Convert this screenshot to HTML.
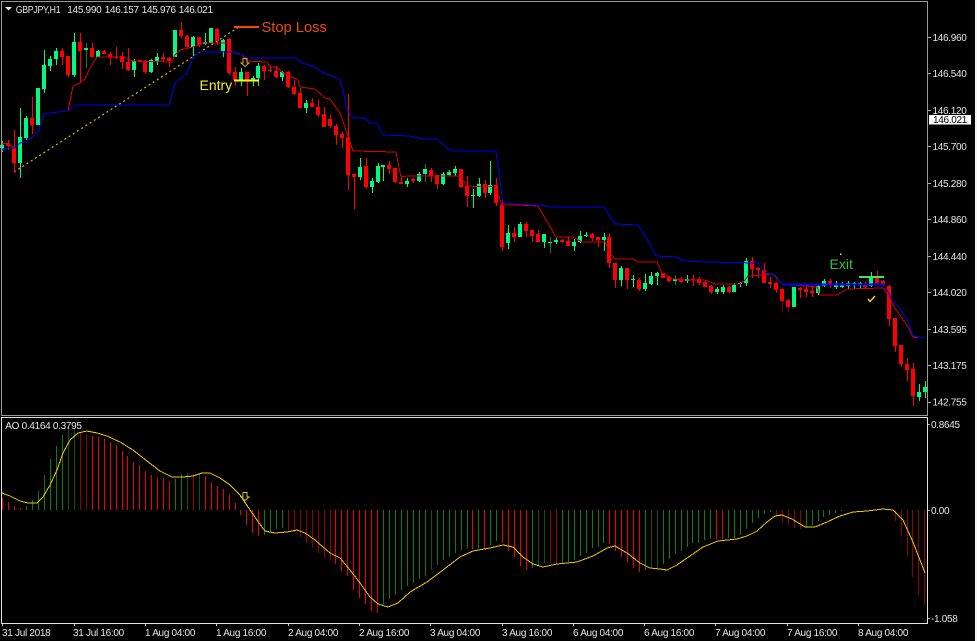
<!DOCTYPE html>
<html><head><meta charset="utf-8"><title>GBPJPY,H1</title>
<style>
html,body{margin:0;padding:0;background:#000;overflow:hidden}
svg{display:block;position:absolute;left:0;top:0}
text{font-family:"Liberation Sans",sans-serif}
.t{font-size:10px;letter-spacing:-.3px;fill:#e6e6e6}
.w{fill:none;stroke-width:1;shape-rendering:crispEdges}
.b{fill:none;stroke-width:4;shape-rendering:crispEdges}
.l{fill:none;stroke-linejoin:round;shape-rendering:crispEdges}
</style></head><body>
<svg width="977" height="641" viewBox="0 0 977 641" xmlns="http://www.w3.org/2000/svg">
<rect width="977" height="641" fill="#000"/>
<rect x="975" y="0" width="2" height="641" fill="#f4f4f4"/>

<!-- trend line -->
<path d="M14 172L239 27" fill="none" stroke="#e0b400" stroke-width="1.2" stroke-dasharray="2 3"/>

<!-- candles: wicks -->
<g transform="translate(.5 0)">
<path class="w" stroke="#00fa7f" d="M2 141V152M20 108V178M26 116V140M38 88V125M44 50V93M50 56V71M56 48V65M74 33V77M98 50V57M134 59V77M151 59V73M157 53V65M175 30V57M193 36V56M205 33V45M211 28V43M223 39V57M241 68V86M253 76V86M258 63V86M282 71V81M306 100V113M360 158V180M372 178V193M378 163V183M383 165V181M407 178V187M419 172V182M443 172V185M449 170V176M455 166V176M473 189V208M479 178V197M490 161V195M508 225V249M520 222V237M544 234V248M556 238V244M574 239V251M580 231V243M586 232V237M604 233V251M621 266V286M633 275V287M645 274V291M651 272V285M657 272V285M687 275V283M717 287V294M723 285V294M734 283V292M740 282V287M746 258V286M794 287V307M818 285V295M824 279V287M836 281V289M842 282V288M848 281V289M854 282V289M860 282V289M871 272V287M919 384V401M925 381V398"/>
<path class="w" stroke="#0a7a40" d="M86 43V68M425 164V182M550 237V253M675 275V285"/>
<path class="w" stroke="#ff0000" d="M8 140V150M14 130V173M32 97V134M62 48V65M68 56V77M80 33V82M92 43V57M104 50V54M110 52V65M116 47V59M122 52V69M128 48V71M140 60V62M145 60V74M163 53V62M169 57V67M181 22V38M187 35V47M199 37V47M217 28V45M229 38V75M235 67V86M247 72V96M264 65V80M270 66V72M276 66V78M288 71V88M294 80V95M300 88V108M312 98V107M318 100V117M324 107V127M330 115V128M336 124V145M342 132V148M348 94V190M354 173V209M366 158V189M389 161V174M395 168V183M401 177V184M413 178V183M431 168V182M437 175V189M461 169V188M467 176V207M485 180V198M496 178V206M502 200V251M514 227V242M526 222V237M532 230V242M538 230V242M562 239V243M568 237V246M592 233V241M598 237V247M609 233V268M615 263V288M627 268V289M639 278V291M663 273V278M669 276V282M681 277V283M693 275V286M699 277V285M705 280V287M711 285V294M729 286V293M752 257V278M758 267V278M764 263V283M770 277V288M776 282V293M800 287V298M806 285V297M812 287V297M830 279V288M865 282V289M877 271V284M883 280V286M889 285V326M895 318V352M901 345V367M907 358V381M913 363V406"/>
<path class="w" stroke="#8a0000" d="M782 288V312M788 298V312"/>
</g>
<!-- candles: bodies -->
<path class="b" stroke="#00fa7f" d="M2 145V148M20 137V163M26 118V138M38 88V125M44 65V89M50 59V66M56 51V59M74 42V75M86 48V50M98 51V57M134 61V70M151 60V72M157 57V61M175 30V57M193 37V47M205 42V44M211 28V43M223 40V51M241 72V80M253 78V80M258 66V78M282 72V77M306 103V108M360 167V177M372 181V187M378 166V182M383 165V167M407 181V184M419 174V181M425 169V174M443 174V184M449 172V175M455 169V173M473 195V196M479 184V196M490 185V193M508 233V243M520 224V237M544 234V242M550 242V243M556 240V242M574 242V246M580 236V242M586 235V236M604 237V240M621 268V280M633 279V280M645 283V289M651 276V284M657 273V276M675 279V281M687 279V281M717 289V292M723 287V292M734 285V292M740 283V284M746 261V283M794 287V307M818 286V293M824 281V286M836 285V287M842 285V287M848 283V286M854 283V284M860 283V285M871 278V286M919 392V397M925 387V392"/>
<path class="b" stroke="#ff0000" d="M8 143V146M14 148V163M32 118V125M62 51V57M68 56V75M80 42V51M92 48V57M104 51V54M110 54V57M116 57V58M122 56V62M128 62V70M140 60V62M145 61V72M163 57V59M169 58V61M181 30V36M187 36V47M199 37V45M217 29V41M229 39V73M235 72V80M247 72V80M264 66V71M270 70V71M276 71V77M288 72V87M294 87V94M300 93V108M312 103V107M318 107V115M324 114V127M330 119V126M336 126V135M342 134V138M348 137V175M354 174V177M366 166V187M389 165V169M395 168V182M401 182V184M413 179V181M431 170V176M437 175V184M461 169V187M467 186V196M485 184V193M496 185V203M502 205V247M514 233V237M526 224V231M532 230V236M538 234V242M562 240V242M568 241V246M592 234V238M598 237V240M609 237V263M615 263V280M627 268V280M639 280V289M663 273V278M669 277V281M681 279V282M693 279V280M699 279V283M705 282V287M711 286V292M729 287V292M752 261V269M758 268V270M764 270V283M770 282V284M776 283V290M782 289V301M788 300V307M800 288V290M806 289V292M812 291V293M830 281V285M865 284V287M877 278V283M883 281V284M889 286V319M895 318V346M901 345V364M907 364V370M913 369V396"/>

<!-- channel lines -->
<path class="l" stroke="#d80000" stroke-width="1" d="M2 143L8 144L14 148"/>
<path class="l" stroke="#d80000" stroke-width="1" d="M68 111L73 86L78 84L85 79L90 68L97 57L123 57L133 61L172 62L175 55L180 50L193 47L203 43L227 43L232 52L242 55L247 61L267 62L270 67L277 67L283 73L298 80L300 87L315 89L325 98L330 99L340 113L347 133L353 151L396 152L401 177L407 176L435 176L460 176L467 186L485 187L495 186L502 205L517 205L538 206L556 237L573 237L582 242L605 242L610 253L615 259L633 259L638 262L657 262L662 273L673 279L687 280L705 280L715 284L740 284L745 280L748 276L763 275L773 274L782 284L817 287L820 295L837 295L847 289L883 288L888 295L895 308L908 327L913 337L918 338"/>
<path class="l" stroke="#0000f0" stroke-width="1" d="M2 150L8 148L14 148L20 143L26 142L32 137L38 132L44 114L50 113L68 111L75 105L169 105L175 83L180 79L187 73L193 58L199 52L230 52L237 53L242 55L247 58L295 58L302 63L315 67L323 73L330 75L340 80L343 90L347 110L353 118L365 118L370 123L377 123L383 135L409 136L423 139L437 139L447 148L454 151L496 151L503 203L547 206L550 207L604 207L615 224L638 225L650 244L656 256L677 257L683 261L707 262L758 263L765 273L775 275L782 284"/>
<path class="l" stroke="#0000f0" stroke-width="2" d="M782 284.5L884 284.5"/>
<path class="l" stroke="#0000f0" stroke-width="1" d="M884 284L891 298L907 318L913 336L925 338"/>

<!-- annotations -->
<path d="M234 27H259" stroke="#ff4500" stroke-width="2" fill="none"/>
<text x="261.5" y="32" style="font-size:14.7px;fill:#ea4e0c">Stop Loss</text>
<path d="M234 80.5H259" stroke="#ffff00" stroke-width="2" fill="none"/>
<text x="199.5" y="90" style="font-size:14px;fill:#f0f020">Entry</text>
<path d="M243 58.5H247V63H249L245 66.5L241 63H243Z" fill="none" stroke="#d8b020" stroke-width="1"/>
<text x="829.5" y="269" style="font-size:14px;fill:#38c038">Exit</text>
<rect x="840" y="253.5" width="1.5" height="1.5" fill="#a8e8a8"/>
<path d="M859 277H884" stroke="#40e060" stroke-width="2" fill="none"/>
<path d="M868 299L870 301.5L875 296" stroke="#e8d020" stroke-width="1.5" fill="none"/>

<!-- AO histogram -->
<g transform="translate(.5 0)">
<path class="w" stroke="#ee0000" d="M2 510V498M8 510V502M14 510V506M20 510V508M92 510V436M98 510V437M104 510V439M110 510V442M116 510V445M122 510V451M127 510V456M133 510V462M139 510V465M145 510V471M151 510V475M157 510V478M163 510V478M169 510V481M205 510V476M211 510V482M217 510V486M223 510V489M229 510V494M235 510V503M240 510V515M246 510V525M252 510V533M258 510V536M335 510V564M341 510V571M347 510V576M353 510V590M359 510V598M365 510V604M371 510V611M377 510V613M472 510V549M484 510V549M502 510V543M508 510V551M514 510V557M520 510V566M526 510V570M609 510V544M615 510V551M621 510V557M627 510V562M633 510V568M639 510V572M710 510V539M716 510V539M722 510V539"/>
<path class="w" stroke="#920000" d="M80 510V432M86 510V434M193 510V474M288 510V530M294 510V532M300 510V537M306 510V543M312 510V548M318 510V553M324 510V558M330 510V560M550 510V563M556 510V564M776 510V516M782 510V522M788 510V525M794 510V528M800 510V529M895 510V521M901 510V536M907 510V556M912 510V577M918 510V595M924 510V605"/>
<path class="w" stroke="#0e7c0e" d="M26 510V506M32 510V500M38 510V491M44 510V475M50 510V459M56 510V446M62 510V435M175 510V479M181 510V474M264 510V535M270 510V532M276 510V529M282 510V528M383 510V604M389 510V599M395 510V595M401 510V590M407 510V586M413 510V583M419 510V579M425 510V576M437 510V565M443 510V560M449 510V557M455 510V553M461 510V550M467 510V548M478 510V548M490 510V545M496 510V541M532 510V568M562 510V563M568 510V562M574 510V560M580 510V556M586 510V553M592 510V548M598 510V547M603 510V543M645 510V570M663 510V564M669 510V559M675 510V554M681 510V551M687 510V547M692 510V543M698 510V543M704 510V540M710 510V538M728 510V538M734 510V538M740 510V535M746 510V529M752 510V523M758 510V518M764 510V514M770 510V512M806 510V528M812 510V525M818 510V521M823 510V517M829 510V515M835 510V513M841 510V511"/>
<path class="w" stroke="#075807" d="M68 510V427M74 510V428M187 510V473M199 510V474M431 510V570M538 510V565M544 510V563M651 510V567M657 510V568"/>
</g>
<path class="l" stroke="#f0c800" stroke-width="1" d="M2 493L10 496L20 501L28 503L37 503L43 497L50 485L57 470L63 453L70 440L78 433L87 431L97 433L107 436L120 442L133 450L147 461L160 471L172 477L183 477L193 476L202 473L210 473L220 478L230 485L240 495L248 507L257 520L265 531L275 533L287 532L297 530L305 533L315 540L323 547L330 553L340 558L350 570L360 583L370 597L378 604L388 607L398 603L410 592L427 582L443 570L460 557L473 551L490 548L503 545L513 547L523 557L533 564L543 567L557 564L577 562L593 556L607 548L615 546L627 553L640 563L650 568L660 569L667 570L677 565L690 556L703 547L718 541L737 539L747 536L757 531L767 522L775 516L782 515L792 519L805 527L815 527L827 522L840 516L853 512L867 511L883 509L893 510L903 520L913 542L925 573"/>
<path d="M243 492.5H247V497H249L245 500.5L241 497H243Z" fill="none" stroke="#c8c820" stroke-width="1"/>

<!-- frames -->
<path d="M1.5 2V415M1 1.5H928M1 415.5H928M927.5 1V416" stroke="#9a9a9a" stroke-width="1" fill="none"/>
<path d="M1.5 418V623M1 417.5H928M1 623.5H928M927.5 417V624" stroke="#e0e0e0" stroke-width="1" fill="none"/>

<!-- header -->
<path d="M5 7H12L8.5 10.5Z" fill="#f0f0f0"/>
<text x="15.7" y="13" class="t" textLength="44.6" lengthAdjust="spacingAndGlyphs">GBPJPY,H1</text>
<text x="67.3" y="13" class="t">145.990</text>
<text x="104.7" y="13" class="t">146.157</text>
<text x="141.7" y="13" class="t">145.976</text>
<text x="178.7" y="13" class="t">146.021</text>
<text x="5.3" y="429" class="t">AO 0.4164 0.3795</text>

<!-- price axis -->
<path d="M928 37.5H931M928 73.5H931M928 110.5H931M928 146.5H931M928 183.5H931M928 219.5H931M928 256.5H931M928 292.5H931M928 329.5H931M928 365.5H931M928 402.5H931M928 424.5H930M928 510.5H930M928 618.5H930" stroke="#b0b0b0" stroke-width="1" fill="none"/>
<text x="932.5" y="41" class="t">146.960</text>
<text x="932.5" y="77" class="t">146.540</text>
<text x="932.5" y="114" class="t">146.120</text>
<rect x="929" y="115" width="42" height="9.5" fill="#fff"/>
<text x="933" y="123" class="t" style="fill:#000">146.021</text>
<text x="932.5" y="150" class="t">145.700</text>
<text x="932.5" y="187" class="t">145.280</text>
<text x="932.5" y="223" class="t">144.860</text>
<text x="932.5" y="260" class="t">144.440</text>
<text x="932.5" y="296" class="t">144.020</text>
<text x="932.5" y="333" class="t">143.595</text>
<text x="932.5" y="369" class="t">143.175</text>
<text x="932.5" y="405.5" class="t">142.755</text>
<text x="931" y="428" class="t">0.8645</text>
<text x="931" y="514" class="t">0.00</text>
<text x="931" y="622" class="t">-1.058</text>

<!-- time axis -->
<path d="M2.5 624V626M74.5 624V626M145.5 624V626M216.5 624V626M288.5 624V626M359.5 624V626M430.5 624V626M502.5 624V626M573.5 624V626M644.5 624V626M715.5 624V626M787.5 624V626M858.5 624V626" stroke="#c8c8c8" stroke-width="1" fill="none"/>
<text x="2" y="636" class="t">31 Jul 2018</text>
<text x="73" y="636" class="t">31 Jul 16:00</text>
<text x="145" y="636" class="t">1 Aug 04:00</text>
<text x="216" y="636" class="t">1 Aug 16:00</text>
<text x="288" y="636" class="t">2 Aug 04:00</text>
<text x="359" y="636" class="t">2 Aug 16:00</text>
<text x="430" y="636" class="t">3 Aug 04:00</text>
<text x="502" y="636" class="t">3 Aug 16:00</text>
<text x="573" y="636" class="t">6 Aug 04:00</text>
<text x="644" y="636" class="t">6 Aug 16:00</text>
<text x="715" y="636" class="t">7 Aug 04:00</text>
<text x="787" y="636" class="t">7 Aug 16:00</text>
<text x="858" y="636" class="t">8 Aug 04:00</text>
</svg>
</body></html>
